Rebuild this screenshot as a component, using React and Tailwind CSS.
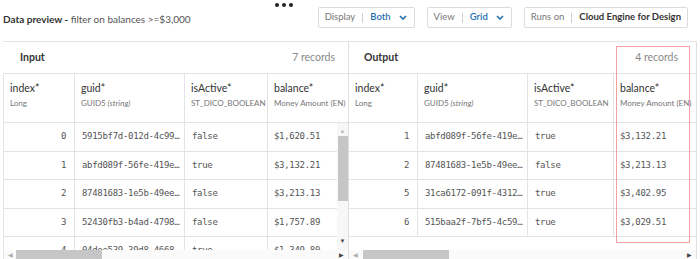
import React from "react";

const inputRows = [
  ["0", "5915bf7d-012d-4c99…", "false", "$1,620.51"],
  ["1", "abfd089f-56fe-419e…", "true", "$3,132.21"],
  ["2", "87481683-1e5b-49ee…", "false", "$3,213.13"],
  ["3", "52430fb3-b4ad-4798…", "false", "$1,757.89"],
  ["4", "04dee539-39d8-4668…", "true", "$1,349.80"],
];

const outputRows = [
  ["1", "abfd089f-56fe-419e…", "true", "$3,132.21"],
  ["2", "87481683-1e5b-49ee…", "false", "$3,213.13"],
  ["5", "31ca6172-091f-4312…", "true", "$3,402.95"],
  ["6", "515baa2f-7bf5-4c59…", "true", "$3,029.51"],
];

const inputW = ["w-[71px]", "w-[110px]", "w-[83px]", "w-[90px]"];
const outputW = ["w-[69px]", "w-[110px]", "w-[86px]", "w-[90px]"];

const cols = [
  { label: "index*", sub: "Long" },
  { label: "guid*", sub: "GUID5", italic: "(string)" },
  { label: "isActive*", sub: "ST_DICO_BOOLEAN" },
  { label: "balance*", sub: "Money Amount (EN)" },
];

const mono = "font-['DejaVu_Sans_Mono',monospace] text-[9px] tracking-[-0.3px] text-[#555]";

function Chevron() {
  return (
    <svg width="8" height="5" viewBox="0 0 8 5" className="ml-[8px]">
      <path d="M1 1l3 3 3-3" fill="none" stroke="#1f6fad" strokeWidth="1.6" />
    </svg>
  );
}

function Pill({ label, value, blue, chevron }) {
  return (
    <div className={`h-[21px] flex items-center pl-[6px] ${chevron ? "pr-[7px]" : "pr-[6px]"} border border-[#dcdcdc] rounded-[2px] text-[9.5px]`}>
      <span className="text-[#777]">{label}</span>
      <span className="w-px h-[10px] bg-[#d0d0d0] mx-[7px]" />
      <span className={blue ? "text-[#1f6fad] font-semibold" : "text-[#333] font-bold"}>{value}</span>
      {chevron && <Chevron />}
    </div>
  );
}

function HeaderRow({ widths }) {
  return (
    <div className="flex h-[50px] border-t border-b border-[#e4e4e4] shrink-0">
      {cols.map((c, i) => (
        <div
          key={i}
          className={`${widths[i]} shrink-0 border-r border-[#e4e4e4] px-[6px] pt-[7px] overflow-hidden whitespace-nowrap`}
        >
          <div className="text-[10.5px] text-[#333] leading-[14px]">{c.label}</div>
          <div className="text-[8px] text-[#777] leading-[12px] mt-[2px]">
            {c.sub}
            {c.italic && <span className="italic"> {c.italic}</span>}
          </div>
        </div>
      ))}
    </div>
  );
}

function DataRow({ r, widths }) {
  return (
    <div className="flex h-[28.5px] border-b border-[#e4e4e4] shrink-0">
      <div className={`${widths[0]} shrink-0 border-r border-[#e4e4e4] flex items-center justify-end pr-[8px] ${mono}`}>{r[0]}</div>
      <div className={`${widths[1]} shrink-0 border-r border-[#e4e4e4] flex items-center pl-[7px] whitespace-nowrap overflow-hidden ${mono}`}>{r[1]}</div>
      <div className={`${widths[2]} shrink-0 border-r border-[#e4e4e4] flex items-center pl-[7px] ${mono}`}>{r[2]}</div>
      <div className={`${widths[3]} shrink-0 border-r border-[#e4e4e4] flex items-center pl-[6px] whitespace-nowrap ${mono}`}>{r[3]}</div>
    </div>
  );
}

function HScroll({ thumbLeft }) {
  return (
    <div className="h-[12px] flex items-start shrink-0 bg-[#fafafa]">
      <span className="w-[12px] h-[9px] flex items-center justify-center text-[6px] text-[#aaa] leading-none">◀</span>
      <div className={`${thumbLeft} w-[86px] h-[10px] bg-[#c6c6c6]`} />
      <div className="flex-1" />
      <span className="w-[14px] h-[9px] flex items-center justify-center text-[6px] text-[#444] leading-none">▶</span>
    </div>
  );
}

function Panel({ title, count, rows, vscroll, thumbLeft, padL, padR, widths, gridBorder }) {
  return (
    <div className="flex flex-col h-full overflow-hidden min-w-0">
      <div className={`h-[31px] flex items-center justify-between shrink-0 ${padL} ${padR}`}>
        <span className="text-[10.5px] font-bold text-[#333]">{title}</span>
        <span className="text-[10.5px] text-[#888]">{count}</span>
      </div>
      <div className={`flex flex-col shrink-0 min-w-0 ${gridBorder}`}>
        <div className="overflow-hidden shrink-0">
          <HeaderRow widths={widths} />
        </div>
        <div className="flex h-[127px] shrink-0 min-w-0">
          <div className="flex-1 min-w-0 flex flex-col overflow-hidden">
            {rows.map((r, i) => (
              <DataRow key={i} r={r} widths={widths} />
            ))}
          </div>
          {vscroll && (
            <div className="w-[11px] shrink-0 bg-[#f7f7f7] flex flex-col items-center">
              <span className="h-[11px] mt-[2px] flex items-center text-[6px] text-[#bbb] leading-none">▲</span>
              <div className="w-[10px] h-[65px] bg-[#c6c6c6]" />
              <div className="flex-1" />
              <span className="h-[12px] mb-[3px] flex items-center text-[6px] text-[#444] leading-none">▼</span>
            </div>
          )}
        </div>
        <HScroll thumbLeft={thumbLeft} />
      </div>
    </div>
  );
}

export default function App() {
  return (
    <div className="relative w-[700px] h-[259px] overflow-hidden bg-white font-['Lato','Noto_Sans',sans-serif]">
      <div className="absolute left-[275px] top-[3px] flex gap-[3px]">
        <span className="w-[4px] h-[4px] rounded-full bg-[#222]" />
        <span className="w-[4px] h-[4px] rounded-full bg-[#222]" />
        <span className="w-[4px] h-[4px] rounded-full bg-[#222]" />
      </div>
      <div className="h-[41px] flex items-center pl-[3px] pr-[12px] pb-[6px]">
        <div className="text-[10px] mt-[4px] whitespace-nowrap">
          <span className="font-bold text-[#333]">Data preview - </span>
          <span className="text-[#555]">filter on balances &gt;=$3,000</span>
        </div>
        <div className="ml-auto flex gap-[12px]">
          <Pill label="Display" value="Both" blue chevron />
          <Pill label="View" value="Grid" blue chevron />
          <Pill label="Runs on" value="Cloud Engine for Design" />
        </div>
      </div>
      <div className="ml-[3px] w-[694px] h-[218px] border-t border-[#e4e4e4] flex overflow-hidden">
        <div className="w-[346px] shrink-0 border-r border-[#e0e0e0] h-full min-w-0">
          <Panel
            title="Input"
            count="7 records"
            rows={inputRows}
            vscroll
            thumbLeft="ml-[0px]"
            padL="pl-[17px]"
            padR="pr-[13px]"
            widths={inputW}
            gridBorder="border-l border-[#e4e4e4]"
          />
        </div>
        <div className="flex-1 min-w-0 h-full border-r border-[#e0e0e0]">
          <Panel
            title="Output"
            count="4 records"
            rows={outputRows}
            thumbLeft="ml-[2px]"
            padL="pl-[15px]"
            padR="pr-[18px]"
            widths={outputW}
            gridBorder=""
          />
        </div>
      </div>
      <div className="absolute left-[616px] top-[46px] w-[74px] h-[197px] border-[1.5px] border-[#f4a0a0]" />
    </div>
  );
}
